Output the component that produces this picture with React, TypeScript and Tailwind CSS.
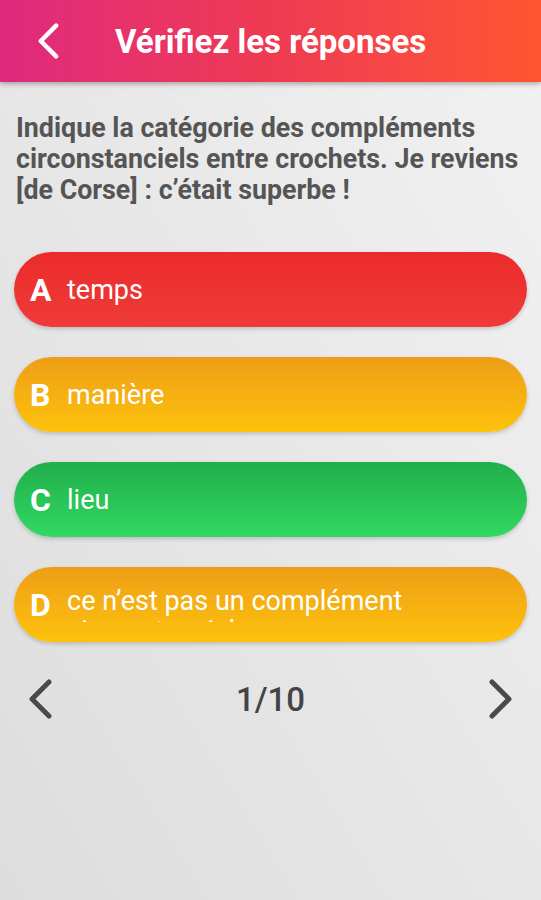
import React from "react";

type Answer = {
  letter: string;
  text: string;
  tone: "red" | "yellow" | "green";
};

const answers: Answer[] = [
  { letter: "A", text: "temps", tone: "red" },
  { letter: "B", text: "manière", tone: "yellow" },
  { letter: "C", text: "lieu", tone: "green" },
  { letter: "D", text: "ce n’est pas un complément circonstanciel", tone: "yellow" },
];

const toneClass = {
  red: "bg-gradient-to-b from-[#eb2a2a] to-[#ef3b39]",
  yellow: "bg-gradient-to-b from-[#ee9e16] to-[#fdc20b]",
  green: "bg-gradient-to-b from-[#22ae4c] to-[#31d961]",
};

const questionLines = [
  "Indique la catégorie des compléments",
  "circonstanciels entre crochets. Je reviens",
  "[de Corse] : c’était superbe !",
];

const Chevron = ({ dir, className }: { dir: "left" | "right"; className?: string }) => (
  <svg viewBox="0 0 24 40" className={className} fill="none">
    {dir === "left" ? (
      <polyline points="21,3 4,20 21,37" stroke="currentColor" strokeWidth="5" strokeLinecap="round" strokeLinejoin="round" />
    ) : (
      <polyline points="3,3 20,20 3,37" stroke="currentColor" strokeWidth="5" strokeLinecap="round" strokeLinejoin="round" />
    )}
  </svg>
);

export default function App() {
  return (
    <div
      className="w-[541px] h-[900px] overflow-hidden flex flex-col bg-gradient-to-tr from-[#dddddd] to-[#f2f2f2]"
      style={{ fontFamily: "Roboto, 'Noto Sans', sans-serif" }}
    >
      {/* header */}
      <div className="h-[82px] shrink-0 flex items-center bg-gradient-to-r from-[#e0287d] via-[#ef3a52] to-[#ff5530] shadow-[0_2px_5px_rgba(0,0,0,0.3)] relative z-10">
        <div className="w-[115px] pl-[36px] flex items-center">
          <Chevron dir="left" className="w-[24px] h-[36px] text-white" />
        </div>
        <h1 className="text-white font-bold text-[33px] leading-none">Vérifiez les réponses</h1>
      </div>

      {/* question */}
      <p className="mt-[31px] px-[16px] text-[26.8px] leading-[31px] font-bold text-[#555555]">
        {questionLines.map((l) => (
          <span key={l} className="block whitespace-nowrap">
            {l}
          </span>
        ))}
      </p>

      {/* answers */}
      <div className="mt-[46px] mx-[14px] flex flex-col gap-[30px]">
        {answers.map((a) => (
          <div
            key={a.letter}
            className={`h-[75px] rounded-full flex items-center pl-[16px] pr-6 text-white shadow-[0_2px_4px_rgba(0,0,0,0.18)] ${toneClass[a.tone]}`}
          >
            <span className="w-[37px] shrink-0 text-[32px] font-bold leading-none">{a.letter}</span>
            {a.letter === "D" ? (
              <span className="h-[36px] -mt-[1px] overflow-hidden text-[27px] leading-[30px]">{a.text}</span>
            ) : (
              <span className="text-[27px] leading-[30px]">{a.text}</span>
            )}
          </div>
        ))}
      </div>

      {/* pager */}
      <div className="mt-[37px] px-[28px] flex items-center justify-between text-[#4a4a4a]">
        <Chevron dir="left" className="w-[24px] h-[40px]" />
        <span className="text-[33px] font-medium leading-none text-[#444444]">1/10</span>
        <Chevron dir="right" className="w-[24px] h-[40px]" />
      </div>
    </div>
  );
}
